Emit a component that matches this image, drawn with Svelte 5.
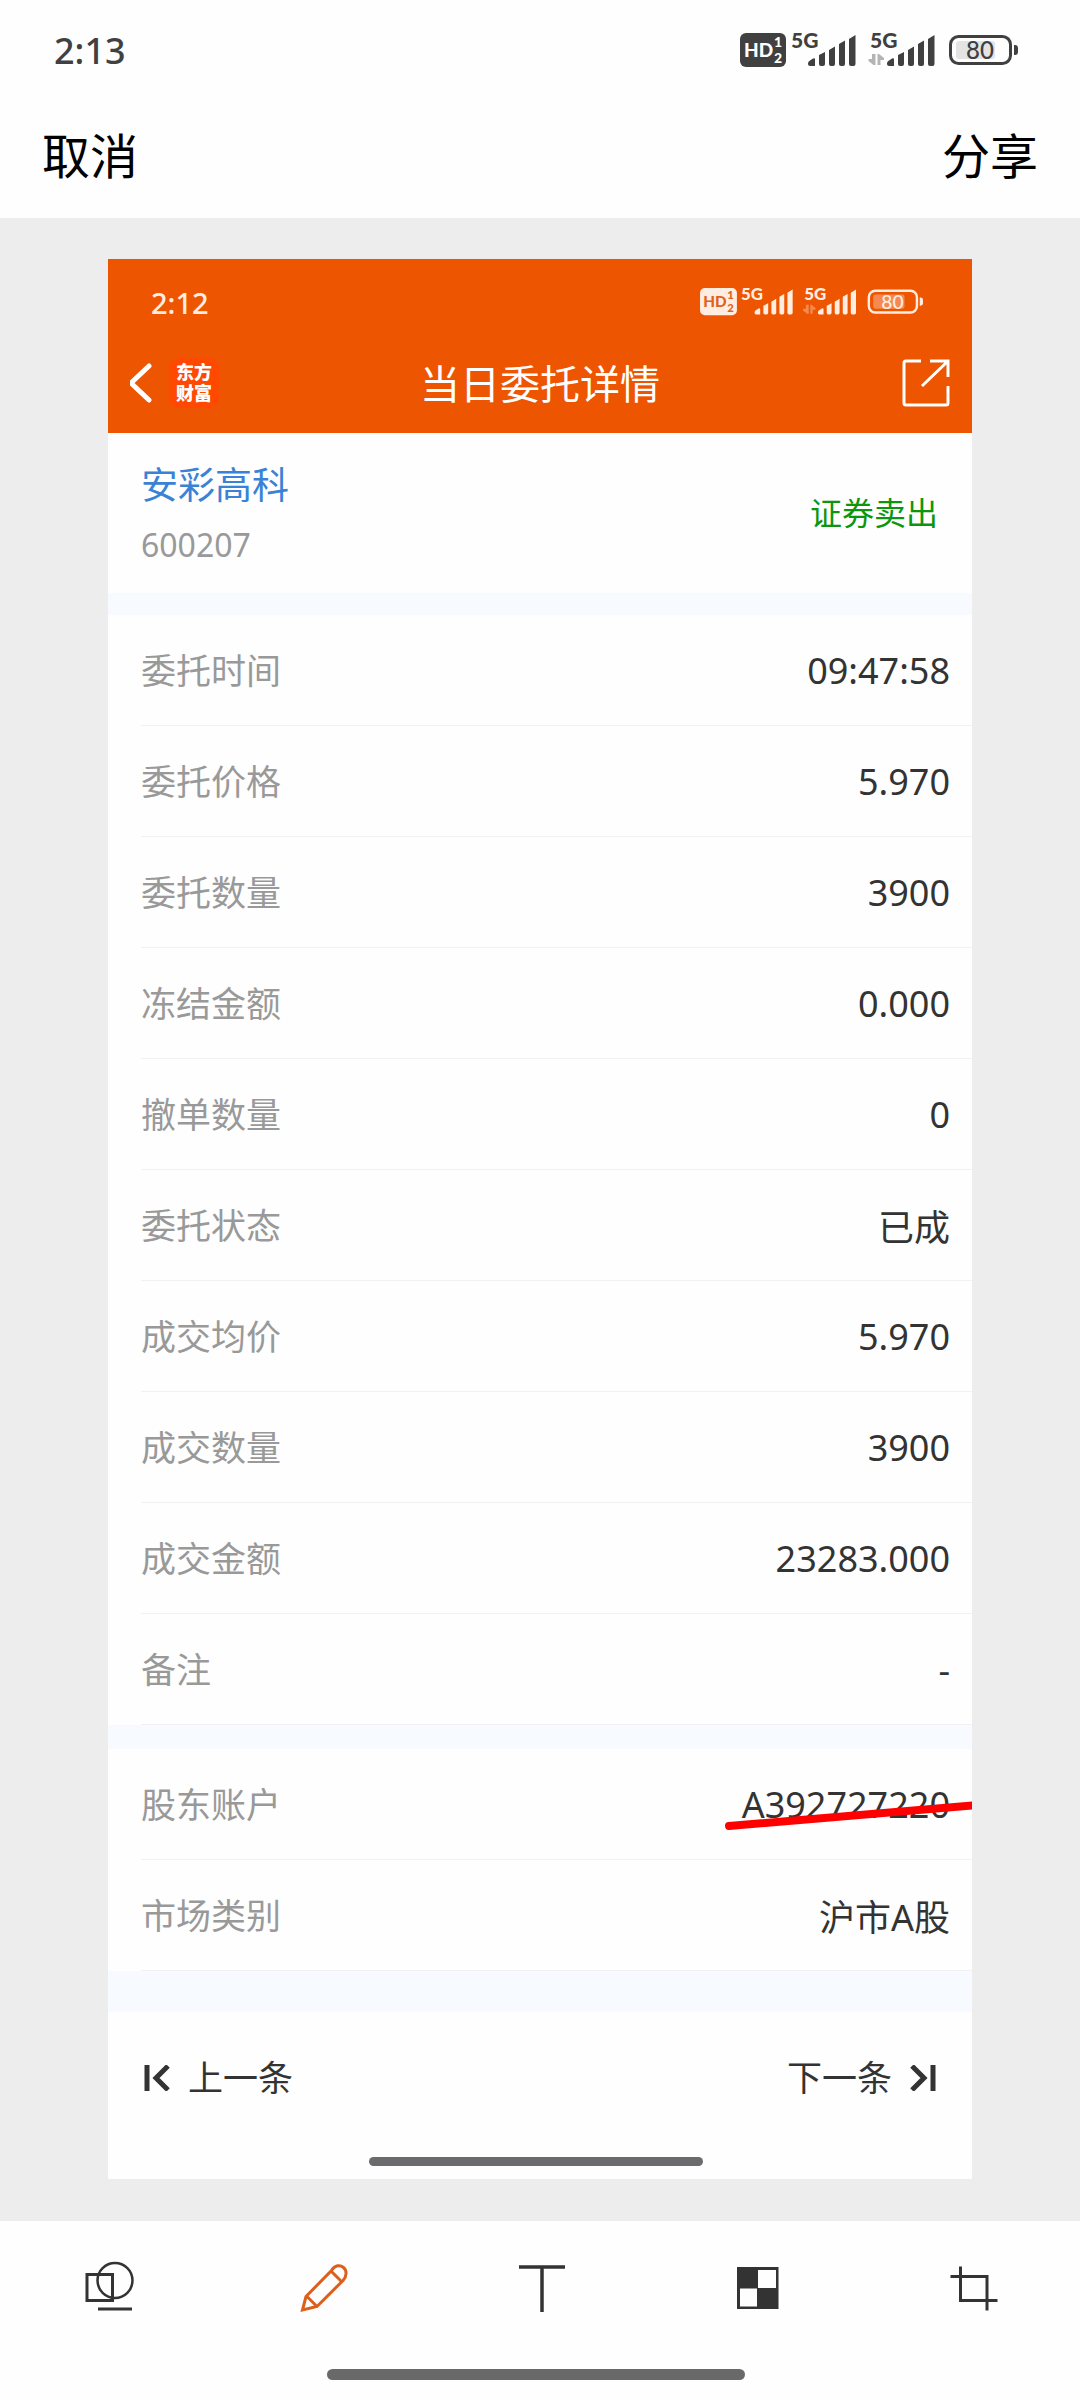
<script>
  const orderRows = [
    ['委托时间', '09:47:58'],
    ['委托价格', '5.970'],
    ['委托数量', '3900'],
    ['冻结金额', '0.000'],
    ['撤单数量', '0'],
    ['委托状态', '已成'],
    ['成交均价', '5.970'],
    ['成交数量', '3900'],
    ['成交金额', '23283.000'],
    ['备注', '-'],
  ];
</script>

{#snippet bars()}
  <path d="M68 30.500q0-2 2-3l3-2q2-1 2 1v6.500h-5q-2 0-2-2zM79 22l6-3v12q0 2-2 2h-2q-2 0-2-2zM89 17l6-3.500v17.500q0 2-2 2h-2q-2 0-2-2zM99 11l6-3.500v23.500q0 2-2 2h-2q-2 0-2-2zM109 6l6.500-4v29q0 2-2 2h-2.500q-2 0-2-2z" />
{/snippet}

{#snippet statusIcons()}
  <svg class="status-icons" viewBox="0 0 278 34" aria-hidden="true">
    <rect width="46" height="34" rx="6" />
    <text class="cut" x="4" y="24" font-size="19">HD</text>
    <text class="cut" x="34" y="14" font-size="14">1</text>
    <text class="cut" x="34" y="30" font-size="14">2</text>
    <text x="51" y="15" font-size="21">5G</text>
    {@render bars()}
    <text x="130" y="15" font-size="21">5G</text>
    <g transform="translate(79 0)">{@render bars()}</g>
    <path class="faint" d="M132 21h3.500v11h-2l-5-4v-2h3.500zM137.500 21h1.500l5 4v2h-3.500v5h-3z" />
    <rect class="shade" x="216" y="8" width="39" height="18" rx="3" />
    <rect class="frame" x="210.500" y="3.500" width="60" height="27" rx="8" />
    <path d="M274 12h1q3 0 3 3v4q0 3-3 3h-1z" />
    <text class="level" x="240" y="26" font-size="24" text-anchor="middle">80</text>
  </svg>
{/snippet}

<div class="screen">
  <div class="status">
    <span>2:13</span>
    {@render statusIcons()}
  </div>
  <nav class="actions">
    <button>取消</button>
    <button>分享</button>
  </nav>

  <main class="canvas">
    <article class="shot">
      <header class="head">
        <div class="status inner">
          <span>2:12</span>
          {@render statusIcons()}
        </div>
        <div class="title-row">
          <div class="brand">
            <button aria-label="返回">
              <svg width="24" height="40" viewBox="2 0 24 40"><path d="M21 3L3 20l18 17" fill="none" stroke="#fff" stroke-width="5" stroke-linecap="round" stroke-linejoin="round" /></svg>
            </button>
            <div class="logo"><span>东方</span><span>财富</span></div>
          </div>
          <h1>当日委托详情</h1>
          <button class="open" aria-label="打开">
            <svg width="48" height="48" viewBox="0 0 48 48" fill="none" stroke="#fff" stroke-width="3"><path d="M19 2H4q-2 0-2 2v40q0 2 2 2h40q2 0 2-2V27M28 2h18v16M45 3L20 27" /></svg>
          </button>
        </div>
      </header>

      <section class="stock">
        <div>
          <h2>安彩高科</h2>
          <p>600207</p>
        </div>
        <strong>证券卖出</strong>
      </section>

      <dl>
        {#each orderRows as [label, value]}
          <div class="row"><dt>{label}</dt><dd>{value}</dd></div>
        {/each}
      </dl>

      <dl class="account">
        <div class="row">
          <dt>股东账户</dt><dd>A392727220</dd>
          <svg class="scribble" viewBox="0 0 256 111" width="256" height="111" aria-hidden="true"><path d="M13 77L262 56" stroke="#f00" stroke-width="8" stroke-linecap="round" /></svg>
        </div>
        <div class="row"><dt>市场类别</dt><dd>沪市A股</dd></div>
      </dl>

      <footer class="pager">
        <button>
          <svg width="26" height="26" viewBox="0 0 26 26" fill="none" stroke="#333" stroke-width="5"><path d="M3 0v26M24 1L12 13l12 12" /></svg>
          上一条
        </button>
        <button>
          下一条
          <svg width="26" height="26" viewBox="0 0 26 26" fill="none" stroke="#333" stroke-width="5"><path d="M23 0v26M2 1l12 12L2 25" /></svg>
        </button>
      </footer>
      <div class="home"><div class="handle"></div></div>
    </article>
  </main>

  <nav class="tools">
    <button aria-label="形状">
      <svg viewBox="0 0 60 60"><path d="M9 16.500h25.500v26H9zM20 51h34" /><circle cx="37" cy="22.500" r="17.500" stroke-width="2.500" /></svg>
    </button>
    <button aria-label="画笔" class="active">
      <svg viewBox="0 0 60 60"><path d="M8.500 52L12 38.500 37.500 12.500C41 7 46 6.500 49.500 9.500S53 18 49 22.500L23 48.500zM12.500 38l10.500 10.500M37 13l11 11" /></svg>
    </button>
    <button aria-label="文字">
      <svg viewBox="0 0 60 60"><path d="M9 9h46M32 9v45" stroke-width="3.500" /></svg>
    </button>
    <button aria-label="马赛克">
      <svg viewBox="0 0 60 60"><path class="solid" fill-rule="evenodd" d="M11 9h41.500v42H11zM32 12h18v18H32zM14 30.500h17v18H14z" /></svg>
    </button>
    <button aria-label="裁剪">
      <svg viewBox="0 0 60 60"><path d="M18.500 8.500v34h37M8.500 18.500H45v34" /></svg>
    </button>
  </nav>
  <div class="home"><div class="handle large"></div></div>
</div>

<style>
  :global(body) { margin: 0; background: #fefefe; }
  .screen {
    font-family: "Noto Sans", "Noto Sans CJK SC", sans-serif;
    color: #333;
    min-height: 100vh;
    display: flex;
    flex-direction: column;
  }
  h1, h2, p, dl, dd { margin: 0; font-weight: 400; }
  button {
    font: inherit;
    color: inherit;
    background: none;
    border: 0;
    padding: 0;
    cursor: pointer;
  }
  svg { display: block; }

  .status {
    --ink: #404040;
    --paper: #fff;
    --faint: #b4b4b4;
    --shade: #e4e4e4;
    display: flex;
    justify-content: space-between;
    align-items: center;
    height: 100px;
    padding: 0 62px 0 54px;
    font-size: 36px;
    font-weight: 500;
    color: var(--ink);
  }
  .status-icons {
    width: 278px;
    overflow: visible;
    fill: var(--ink);
    font-family: Lato, "Noto Sans", sans-serif;
    font-weight: 900;
  }
  .status-icons .cut { fill: var(--paper); }
  .status-icons .faint { fill: var(--faint); }
  .status-icons .shade { fill: var(--shade); }
  .status-icons .frame { fill: none; stroke: var(--ink); stroke-width: 3; }
  .status-icons .level { font-weight: 500; }
  .inner {
    --ink: #ffede2;
    --paper: #e06020;
    --faint: #f58a50;
    --shade: #f58a50;
    height: 86px;
    padding: 0 49px 0 43px;
    font-size: 29px;
  }
  .inner .status-icons { width: 223px; }

  .actions {
    display: flex;
    justify-content: space-between;
    height: 106px;
    padding: 0 42px 12px;
    font-size: 48px;
    color: #000;
  }

  .canvas { background: #ededed; padding: 41px 10% 42px; }
  .shot { background: #fefefe; padding-bottom: 13px; }
  .head { background: #ee5500; color: #fff; padding-bottom: 12px; }
  .title-row {
    display: grid;
    grid-template-columns: 1fr auto 1fr;
    align-items: center;
    height: 76px;
    padding: 0 22px;
  }
  .brand { display: flex; align-items: center; gap: 15px; }
  .logo {
    display: flex;
    flex-direction: column;
    align-items: center;
    justify-content: center;
    width: 50px;
    height: 50px;
    border-radius: 10px;
    background: #ff4800;
    font-size: 18px;
    font-weight: 900;
    line-height: 21px;
  }
  h1 { font-size: 40px; padding-bottom: 3px; }
  .open { justify-self: end; }

  .stock {
    display: flex;
    justify-content: space-between;
    align-items: center;
    padding: 22px 34px 18px 33px;
    line-height: 60px;
  }
  h2 { font-size: 37px; color: #3a82d6; }
  .stock p { font-size: 32px; color: #999; }
  .stock strong { font-size: 32px; font-weight: 400; color: #0d960d; padding-bottom: 4px; }

  dl { border-top: 22px solid #f7faff; }
  .account { border-top-width: 24px; }
  .row {
    position: relative;
    display: flex;
    justify-content: space-between;
    align-items: center;
    height: 110px;
    margin-left: 33px;
    padding-right: 22px;
    border-bottom: 1px solid #f1f1f1;
  }
  dt { font-size: 35px; color: #999; padding-bottom: 4px; }
  dd { font-size: 36px; }
  .scribble { position: absolute; right: 0; top: 0; overflow: hidden; }

  .pager {
    display: flex;
    justify-content: space-between;
    border-top: 41px solid #f7faff;
    padding: 36px 36px 49px;
    font-size: 35px;
    line-height: 60px;
  }
  .pager button { display: flex; align-items: center; gap: 18px; }
  .home { display: flex; justify-content: center; padding-right: 8px; }
  .handle {
    width: 334px;
    height: 9px;
    border-radius: 5px;
    background: #6b6b6d;
  }

  .tools {
    display: grid;
    grid-template-columns: repeat(5, 1fr);
    justify-items: center;
    padding: 37px 0 51px;
  }
  .tools svg {
    width: 60px;
    height: 60px;
    fill: none;
    stroke: #333;
    stroke-width: 3;
  }
  .tools .active svg { stroke: #dd5f1c; }
  .tools .solid { fill: #333; stroke: none; }
  .large { width: 418px; height: 11px; border-radius: 6px; background: #696969; }
</style>
